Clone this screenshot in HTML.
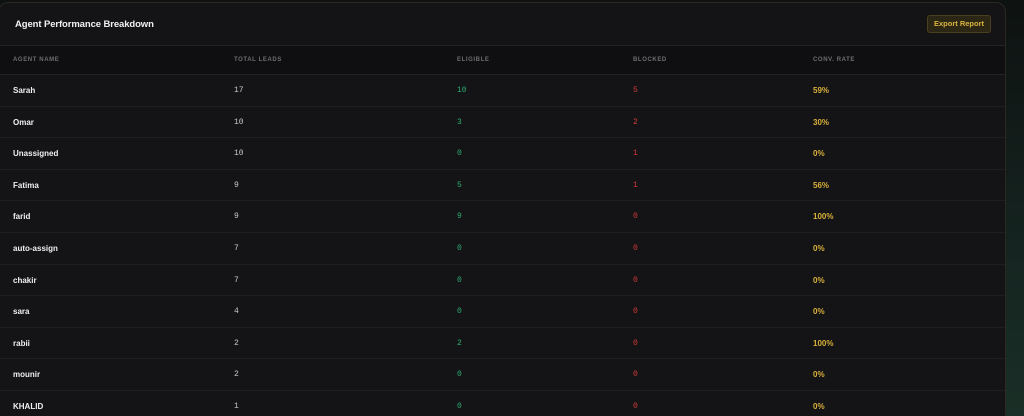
<!DOCTYPE html>
<html><head><meta charset="utf-8"><style>
*{margin:0;padding:0;box-sizing:border-box}
html,body{width:1024px;height:416px;overflow:hidden}
body{background:linear-gradient(180deg,#0e1211 0%,#152420 60%,#1a2f27 100%);font-family:"Liberation Sans",sans-serif;position:relative}
.card{position:absolute;left:-2px;top:2px;width:1008px;height:430px;background:#141416;border:1px solid #2a2820;border-radius:10px;overflow:hidden}
.hdr{height:43px;position:relative;border-bottom:1px solid #232326}
.hdr h2{position:absolute;left:16px;top:16px;font-size:9.5px;color:#f2f2f2;font-weight:bold;letter-spacing:-0.1px}
.btn{position:absolute;left:928px;top:12px;width:64px;height:18px;background:#2c2714;border:1px solid #4a3f1c;border-radius:3px;color:#d9b440;font-size:7.5px;font-weight:bold;text-align:center;line-height:16px}
.th{height:29px;background:#0f0f11;border-bottom:1px solid #232326;position:relative}
.th span{position:absolute;top:11px;font-size:6px;font-weight:bold;color:#6e6e72;letter-spacing:0.6px}
.row{height:31.6px;border-bottom:1px solid #1f1f22;position:relative}
.row span{position:absolute;top:11px;font-size:8px}
.n{color:#f0f0f0;font-weight:bold}
.m{font-family:"Liberation Mono",monospace;font-size:8px}
.t{color:#c8c8c8}.g{color:#2fae72}.r{color:#d43a3a}.y{color:#d9b13a;font-weight:bold}
.c1{left:14px}.c2{left:235px}.c3{left:458px}.c4{left:634px}.c5{left:814px}
</style></head><body>
<div class="card">
<div class="hdr"><h2>Agent Performance Breakdown</h2><div class="btn">Export Report</div></div>
<div class="th"><span class="c1">AGENT NAME</span><span class="c2">TOTAL LEADS</span><span class="c3">ELIGIBLE</span><span class="c4">BLOCKED</span><span class="c5">CONV. RATE</span></div>
<div class="row"><span class="c1 n">Sarah</span><span class="c2 m t">17</span><span class="c3 m g">10</span><span class="c4 m r">5</span><span class="c5 y">59%</span></div>
<div class="row"><span class="c1 n">Omar</span><span class="c2 m t">10</span><span class="c3 m g">3</span><span class="c4 m r">2</span><span class="c5 y">30%</span></div>
<div class="row"><span class="c1 n">Unassigned</span><span class="c2 m t">10</span><span class="c3 m g">0</span><span class="c4 m r">1</span><span class="c5 y">0%</span></div>
<div class="row"><span class="c1 n">Fatima</span><span class="c2 m t">9</span><span class="c3 m g">5</span><span class="c4 m r">1</span><span class="c5 y">56%</span></div>
<div class="row"><span class="c1 n">farid</span><span class="c2 m t">9</span><span class="c3 m g">9</span><span class="c4 m r">0</span><span class="c5 y">100%</span></div>
<div class="row"><span class="c1 n">auto-assign</span><span class="c2 m t">7</span><span class="c3 m g">0</span><span class="c4 m r">0</span><span class="c5 y">0%</span></div>
<div class="row"><span class="c1 n">chakir</span><span class="c2 m t">7</span><span class="c3 m g">0</span><span class="c4 m r">0</span><span class="c5 y">0%</span></div>
<div class="row"><span class="c1 n">sara</span><span class="c2 m t">4</span><span class="c3 m g">0</span><span class="c4 m r">0</span><span class="c5 y">0%</span></div>
<div class="row"><span class="c1 n">rabii</span><span class="c2 m t">2</span><span class="c3 m g">2</span><span class="c4 m r">0</span><span class="c5 y">100%</span></div>
<div class="row"><span class="c1 n">mounir</span><span class="c2 m t">2</span><span class="c3 m g">0</span><span class="c4 m r">0</span><span class="c5 y">0%</span></div>
<div class="row"><span class="c1 n">KHALID</span><span class="c2 m t">1</span><span class="c3 m g">0</span><span class="c4 m r">0</span><span class="c5 y">0%</span></div>
</div>
</body></html>
